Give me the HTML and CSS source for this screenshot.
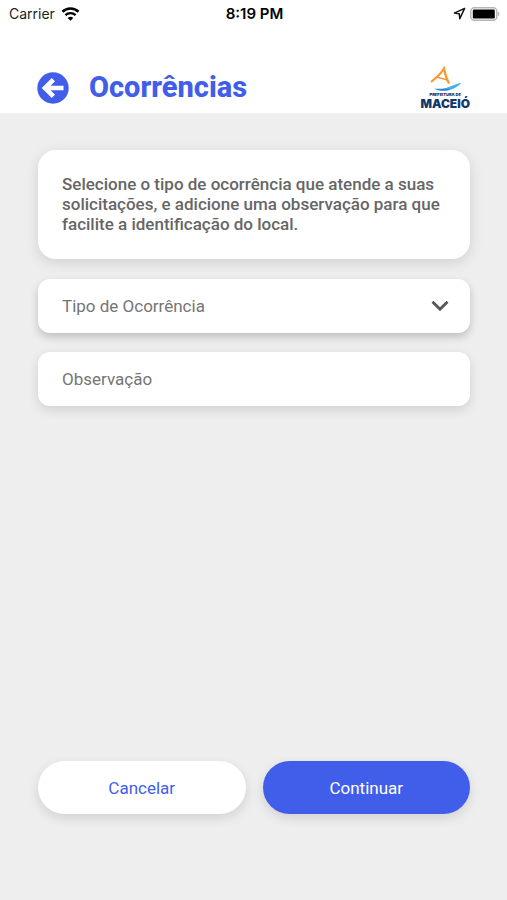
FILE: index.html
```html
<!DOCTYPE html>
<html lang="pt-BR">
<head>
<meta charset="utf-8">
<meta name="viewport" content="width=device-width, initial-scale=1">
<title>Ocorrências</title>
<link rel="stylesheet" href="styles.css">
</head>
<body>
<div class="top">
  <div class="status">
    <div class="status-left">
      <span>Carrier</span>
      <svg width="19" height="14" viewBox="0 0 18 14" aria-hidden="true">
        <path d="M1 4.800a11.400 11.400 0 0 1 16 0" fill="none" stroke="#000" stroke-width="2.600"/>
        <path d="M3.900 8.200a7.300 7.300 0 0 1 10.200 0" fill="none" stroke="#000" stroke-width="2.400"/>
        <path d="M9 13.800 6.200 11a4 4 0 0 1 5.600 0z"/>
      </svg>
    </div>
    <span class="clock">8:19 PM</span>
    <div class="status-right">
      <svg width="13" height="13" viewBox="0 0 13 13" aria-hidden="true">
        <path d="M11.600 1.400 1.400 6.100l4.900.7.5 4.900z" fill="none" stroke="#111" stroke-width="1.500" stroke-linejoin="round"/>
      </svg>
      <svg width="30" height="14" viewBox="0 0 30 14" aria-hidden="true">
        <rect x=".8" y=".8" width="26" height="12.400" rx="3.600" fill="#fff" stroke="#b5b5b5" stroke-width="1.400"/>
        <rect x="2.800" y="2.600" width="22" height="8.800" rx="1.200"/>
        <path d="M27.900 4.800q1.600.6 1.600 2.200t-1.600 2.200z" fill="#b5b5b5"/>
      </svg>
    </div>
  </div>
  <header class="header">
    <button class="back" type="button" aria-label="Voltar">
      <svg width="32" height="32" viewBox="0 0 32 32" aria-hidden="true">
        <circle cx="16" cy="16" r="15.700" fill="#415eea"/>
        <path d="M16.400 7.600 8 16l8.400 8.400M9 16h17.500" fill="none" stroke="#fff" stroke-width="4.600"/>
      </svg>
    </button>
    <h1 class="title">Ocorrências</h1>
    <div class="logo">
      <svg width="36" height="27" viewBox="0 0 36 27" aria-hidden="true">
        <path d="M4 16C9 12 14.500 7 17 2.500 18 8 19.500 13 22 17.500" fill="none" stroke="#f39a35" stroke-width="2.200"/>
        <path d="M9.500 11 20.500 14" fill="none" stroke="#f39a35" stroke-width="1.600"/>
        <path d="M7 22.800C15 26.500 25 25.500 34 17 26 19 23 23.500 7 22.800z" fill="#2386d4"/>
        <path d="M17 22.500C23 21.500 27 18 34 17c-3 3-6 5-9 6z" fill="#46b3e6"/>
      </svg>
      <span class="logo-small">PREFEITURA DE</span>
      <span class="logo-name">MACEIÓ</span>
    </div>
  </header>
</div>
<main class="content">
  <p class="card">Selecione o tipo de ocorrência que atende a suas solicitações, e adicione uma observação para que facilite a identificação do local.</p>
  <form class="form">
    <div class="field field-select">
      <select class="control" aria-label="Tipo de Ocorrência">
        <option>Tipo de Ocorrência</option>
      </select>
      <svg class="chevron" width="18" height="12" viewBox="0 0 18 12" aria-hidden="true">
        <path d="m1.500 1.800 7.500 7.500 7.500-7.500" fill="none" stroke="#555" stroke-width="2.800"/>
      </svg>
    </div>
    <div class="field">
      <input class="control" type="text" placeholder="Observação" aria-label="Observação">
    </div>
    <div class="actions">
      <button class="btn" type="button">Cancelar</button>
      <button class="btn btn-primary" type="submit">Continuar</button>
    </div>
  </form>
</main>
</body>
</html>
```
FILE: styles.css
```css
* {
  box-sizing: border-box;
}

body {
  margin: 0;
  min-height: 100vh;
  display: flex;
  flex-direction: column;
  background: #eee;
  font-family: Roboto, sans-serif;
}

.top {
  background: #fff;
}

.status {
  display: grid;
  grid-template-columns: 1fr auto 1fr;
  align-items: center;
  height: 27px;
  padding: 0 7px 0 9px;
  font: 14px/18px Inter, sans-serif;
  color: #222;
}

.status-left,
.status-right {
  display: flex;
  align-items: center;
  gap: 6px;
}

.status-right {
  justify-content: flex-end;
  gap: 4px;
}

.clock {
  font-size: 15px;
  font-weight: 600;
  color: #000;
}

.header {
  display: flex;
  align-items: flex-end;
  height: 86px;
  padding: 0 37px 3px;
}

.back {
  display: flex;
  margin-bottom: 6px;
  padding: 0;
  border: 0;
  background: none;
}

.title {
  flex: 1;
  margin: 0 0 6px 20px;
  font-size: 29px;
  line-height: 34px;
  font-weight: 800;
  color: #415eea;
}

.logo {
  display: flex;
  flex-direction: column;
  align-items: center;
  font-family: Inter, sans-serif;
  color: #12386b;
}

.logo-small {
  font-size: 4px;
  line-height: 4px;
  font-weight: 900;
}

.logo-name {
  margin-top: 1px;
  font-size: 12px;
  line-height: 12px;
  font-weight: 900;
}

.content {
  flex: 1;
  display: flex;
  flex-direction: column;
  gap: 20px;
  padding: 37px 37px 86px 38px;
}

.card {
  margin: 0;
  padding: 24px 24px 25px;
  border-radius: 18px;
  background: #fff;
  box-shadow: 0 4px 14px rgba(0, 0, 0, .12);
  font-size: 17px;
  line-height: 20px;
  font-weight: 500;
  color: #666;
}

.form {
  flex: 1;
  display: flex;
  flex-direction: column;
  gap: 19px;
}

.field {
  position: relative;
  height: 54px;
  border-radius: 12px;
  background: #fff;
  box-shadow: 0 4px 12px rgba(0, 0, 0, .12);
}

.field-select {
  box-shadow: 0 4px 8px rgba(0, 0, 0, .2);
}

.control {
  appearance: none;
  display: block;
  width: 100%;
  height: 100%;
  padding: 0 24px;
  border: 0;
  border-radius: 12px;
  background: none;
  font: 17px/20px Roboto, sans-serif;
  color: #757575;
}

.control::placeholder {
  color: #757575;
}

.chevron {
  position: absolute;
  top: 21px;
  right: 21px;
  pointer-events: none;
}

.actions {
  display: grid;
  grid-template-columns: 1fr 1fr;
  gap: 17px;
  margin-top: auto;
}

.btn {
  height: 53px;
  border: 0;
  border-radius: 27px;
  background: #fff;
  box-shadow: 0 4px 12px rgba(0, 0, 0, .12);
  font: 17px/20px Roboto, sans-serif;
  color: #415eea;
}

.btn-primary {
  background: #415eea;
  color: #fff;
}
```
